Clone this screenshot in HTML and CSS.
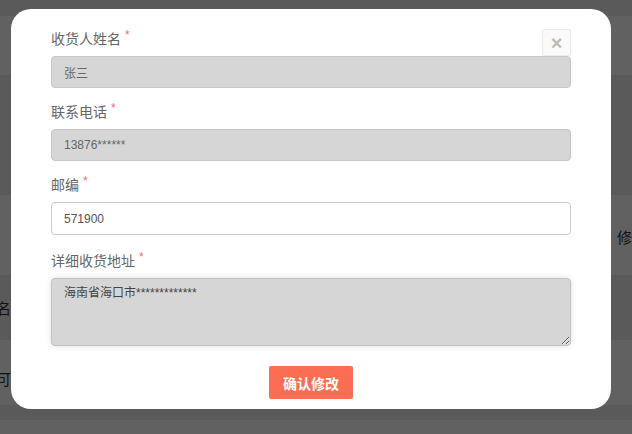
FILE: index.html
```html
<!DOCTYPE html>
<html lang="zh-CN">
<head>
    <meta charset="UTF-8">
    <meta name="viewport" content="width=device-width, initial-scale=1.0">
    <title>修改收货地址</title>
    <link rel="stylesheet" href="styles.css">
</head>
<body>
    <!-- 背景的地址列表 -->
    <div class="page">
        <div class="row row-alt h16"></div>
        <div class="row h59"></div>
        <div class="row row-alt h120"></div>
        <div class="row h80 row-right"><span>修改</span></div>
        <div class="row row-alt h65 row-left"><span>名</span></div>
        <div class="row h65 row-left low"><span>可选</span></div>
        <div class="row row-alt h15"></div>
        <div class="row h16"></div>
    </div>

    <div class="overlay">
        <div class="modal">
            <button type="button" class="close">&times;</button>
            <form>
                <div class="field">
                    <label>收货人姓名<i class="req">*</i></label>
                    <input type="text" value="张三" disabled>
                </div>
                <div class="field">
                    <label>联系电话<i class="req">*</i></label>
                    <input type="text" value="13876******" disabled>
                </div>
                <div class="field wide">
                    <label>邮编<i class="req">*</i></label>
                    <input type="text" value="571900" class="tall">
                </div>
                <div class="field last">
                    <label>详细收货地址<i class="req">*</i></label>
                    <textarea>海南省海口市*************</textarea>
                </div>
                <div class="buttons">
                    <button type="submit">确认修改</button>
                </div>
            </form>
        </div>
    </div>
</body>
</html>
```

FILE: styles.css
```css
body {
    margin: 0;
    font-family: "Liberation Sans", "Noto Sans CJK SC", sans-serif;
    overflow: hidden;
}
.page {
    width: 100%;
}
.row {
    background: #fff;
    color: #333;
    font-size: 15px;
    display: flex;
    align-items: center;
}
.row-alt {
    background: #ededed;
}
.row-right {
    justify-content: flex-end;
}
.row-right span {
    width: 15px;
    overflow: hidden;
    white-space: nowrap;
    margin-top: 3px;
}
.row-left span {
    text-indent: -4px;
}
.row.low span {
    margin-top: 12px;
}
.h15 { height: 15px; }
.h16 { height: 16px; }
.h59 { height: 59px; }
.h65 { height: 65px; }
.h80 { height: 80px; }
.h120 { height: 120px; }

.overlay {
    position: fixed;
    top: 0;
    left: 0;
    right: 0;
    bottom: 0;
    background: rgba(0, 0, 0, 0.62);
    padding: 9px 0 0 11px;
}
.modal {
    position: relative;
    width: 600px;
    box-sizing: border-box;
    padding: 20px 40px 10px;
    background: #fff;
    border-radius: 20px;
}
.close {
    position: absolute;
    top: 20px;
    right: 40px;
    width: 29px;
    height: 27px;
    padding: 0;
    background: #fafafa;
    border: 1px solid #ececec;
    border-radius: 2px;
    color: #bcbcbc;
    font-family: "Liberation Sans", sans-serif;
    font-size: 20px;
    font-weight: bold;
    line-height: 24px;
}
.field {
    margin-bottom: 14px;
}
.field.wide {
    margin-bottom: 16px;
}
.field.last {
    margin-bottom: 0;
}
.field label {
    display: block;
    height: 20px;
    line-height: 20px;
    margin-bottom: 7px;
    font-size: 14px;
    color: #666;
}
.req {
    font-style: normal;
    color: #f36b6b;
    font-size: 12px;
    margin-left: 4px;
    vertical-align: top;
    line-height: 12px;
}
input {
    display: block;
    width: 100%;
    height: 32px;
    box-sizing: border-box;
    padding: 0 12px;
    font-family: "Liberation Sans", "Noto Sans CJK SC", sans-serif;
    font-size: 12px;
    color: #555;
    background: #fff;
    border: 1px solid #cbcbcb;
    border-radius: 4px;
    outline: none;
}
input.tall {
    height: 33px;
}
input:disabled {
    background: #d6d6d6;
    border-color: #c6c6c6;
    color: #666;
}
textarea {
    display: block;
    width: 100%;
    height: 68px;
    box-sizing: border-box;
    padding: 6px 12px;
    font-family: "Liberation Sans", "Noto Sans CJK SC", sans-serif;
    font-size: 12px;
    line-height: 16px;
    color: #444;
    background: #d6d6d6;
    border: 1px solid #c2c2c2;
    border-radius: 4px;
    box-shadow: 0 0 6px rgba(0, 0, 0, 0.12);
    outline: none;
    resize: vertical;
}
.buttons {
    display: flex;
    justify-content: center;
    margin-top: 20px;
}
.buttons button {
    width: 84px;
    height: 33px;
    padding: 0;
    background: #fc6e53;
    color: #fff;
    border: none;
    border-radius: 2px;
    font-family: "Liberation Sans", "Noto Sans CJK SC", sans-serif;
    font-size: 14px;
    font-weight: bold;
    cursor: pointer;
}
```
